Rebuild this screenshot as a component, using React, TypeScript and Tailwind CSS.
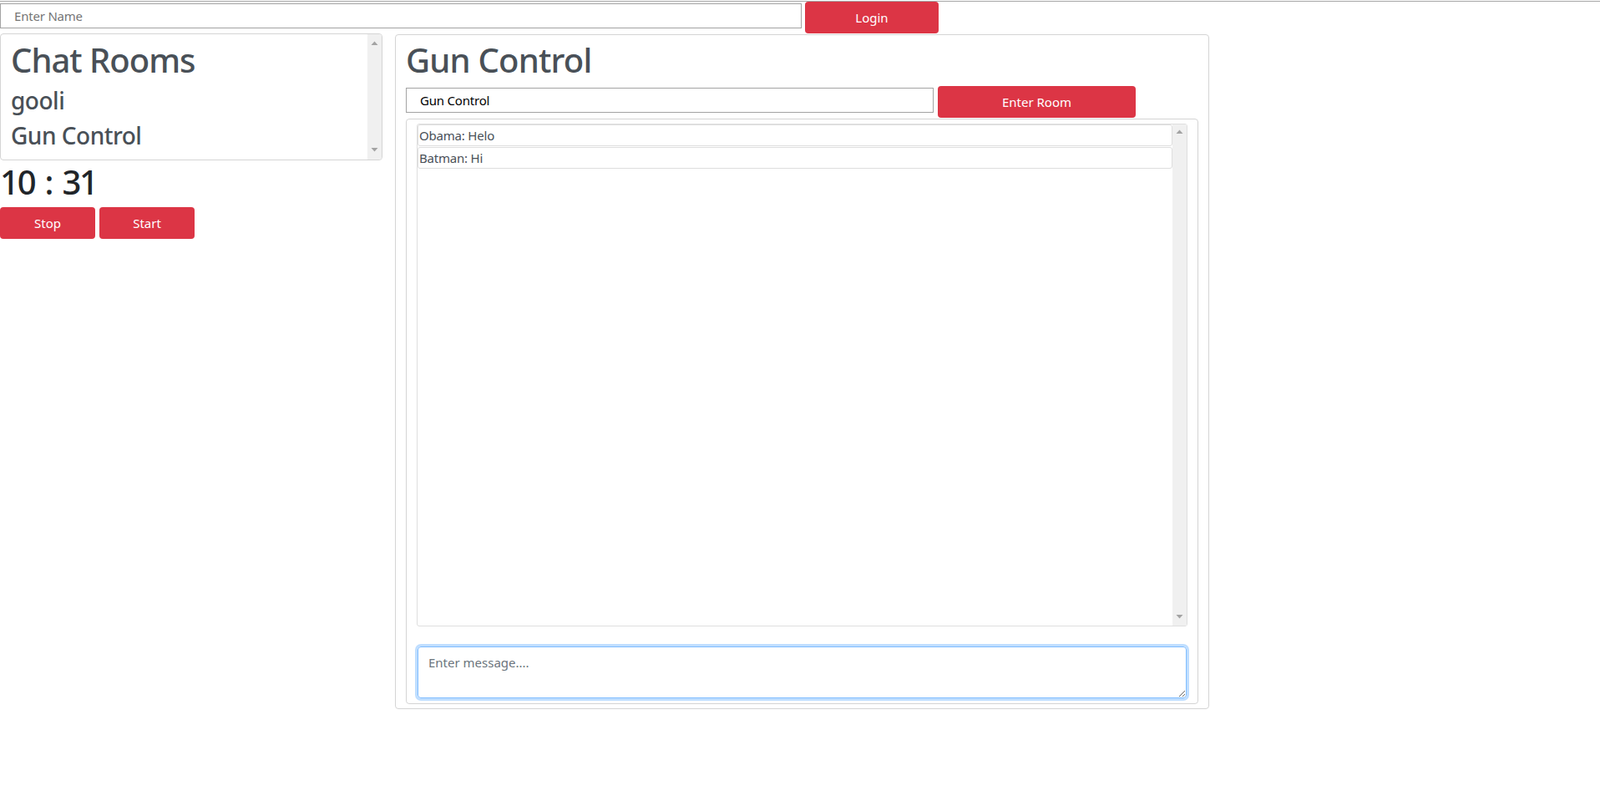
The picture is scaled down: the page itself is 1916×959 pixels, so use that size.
import React from "react";

function Up() {
  return (
    <svg width="9" height="5" viewBox="0 0 9 5">
      <polygon points="0.5,5 8.5,5 4.5,0.5" fill="#a3a3a3" />
    </svg>
  );
}
function Down() {
  return (
    <svg width="9" height="5" viewBox="0 0 9 5">
      <polygon points="0.5,0 8.5,0 4.5,4.5" fill="#a3a3a3" />
    </svg>
  );
}

export default function App() {
  return (
    <div className="min-h-[959px] bg-white font-['Noto_Sans','Open_Sans',sans-serif] text-[16px] text-[#212529]">
      <div className="mt-px h-px bg-[#a6a6a6]" />
      <div className="flex items-start gap-[4px]">
        <input
          placeholder="Enter Name"
          className="mt-[2px] h-[30px] w-[960px] border border-[#a3a3a3] px-[16px] text-[15px] tracking-[-0.2px] text-black outline-none placeholder:text-[#757575]"
        />
        <button className="h-[38px] w-[160px] rounded-[4px] bg-[#dc3545] text-[15px] text-white">
          Login
        </button>
      </div>

      <div className="flex items-start gap-[15px]">
        <div className="w-[458px]">
          <div className="flex h-[152px] overflow-hidden rounded-[4px] border border-[#d4d4d4]">
            <div className="flex-1 pl-[12px] pt-[7px] text-[#495057]">
              <h1 className="mb-2 text-[40px] font-medium leading-[48px] tracking-[-1px]">Chat Rooms</h1>
              <h3 className="mb-2 text-[28px] font-medium leading-[33.6px] tracking-[-0.5px]">gooli</h3>
              <h3 className="mb-2 text-[28px] font-medium leading-[33.6px] tracking-[-0.5px]">Gun Control</h3>
            </div>
            <div className="flex w-[17px] flex-col items-center justify-between bg-[#f0f0f0] pb-[9px] pt-[8px]">
              <Up />
              <Down />
            </div>
          </div>
          <h1 className="mb-[6px] mt-[2px] text-[40px] font-medium leading-[48px] tracking-[-2.2px] text-[#212529] [word-spacing:4px]">
            10 : 31
          </h1>
          <div className="flex gap-[5px]">
            <button className="h-[38px] w-[114px] rounded-[4px] bg-[#dc3545] text-[15px] text-white">Stop</button>
            <button className="h-[38px] w-[114px] rounded-[4px] bg-[#dc3545] text-[15px] text-white">Start</button>
          </div>
        </div>

        <div className="mt-px flex h-[808px] w-[975px] flex-col rounded-[4px] border border-[#d4d4d4] px-[12px] pb-[5px] pt-[6px]">
          <h1 className="mb-[7px] text-[40px] font-medium leading-[48px] tracking-[-0.8px] text-[#495057]">Gun Control</h1>
          <div className="flex items-start gap-[5px]">
            <input
              readOnly
              value="Gun Control"
              className="mt-[2px] h-[30px] w-[632px] border border-[#a3a3a3] px-[16px] text-[15px] tracking-[-0.2px] text-black outline-none"
            />
            <button className="h-[38px] w-[237px] rounded-[4px] bg-[#dc3545] text-[15px] text-white">
              Enter Room
            </button>
          </div>
          <div className="mt-px flex flex-1 flex-col rounded-[4px] border border-[#d4d4d4] px-[12px] pb-[6px] pt-[5px]">
            <div className="flex h-[602px] rounded-[3px] border border-[#dedede]">
              <div className="flex flex-1 flex-col">
                <div className="mb-px h-[26px] rounded-[3px] border border-[#dedede] px-px text-[15px] leading-[24px] tracking-[-0.2px] text-[#495057]">
                  Obama: Helo
                </div>
                <div className="mb-px h-[26px] rounded-[3px] border border-[#dedede] px-px text-[15px] leading-[24px] tracking-[-0.2px] text-[#495057]">
                  Batman: Hi
                </div>
              </div>
              <div className="flex w-[17px] flex-col items-center justify-between bg-[#f0f0f0] pb-[8px] pt-[6px]">
                <Up />
                <Down />
              </div>
            </div>
            <textarea
              autoFocus
              placeholder="Enter message...."
              className="mx-px mt-[24px] h-[62px] resize-y rounded-[4px] border border-[#80bdff] px-[12px] py-[6px] text-[15px] leading-[24px] text-[#495057] shadow-[0_0_0_3px_rgba(0,123,255,0.25)] outline-none placeholder:text-[#6c757d]"
            />
          </div>
        </div>
      </div>
    </div>
  );
}
